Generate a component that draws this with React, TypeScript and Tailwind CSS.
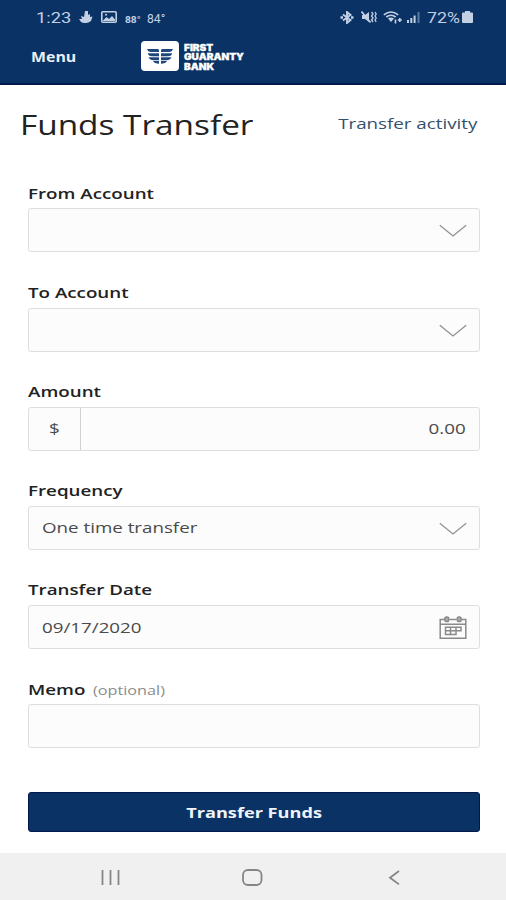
import type { ReactNode } from 'react';

const FIELD = 'flex h-11 w-full items-center justify-between rounded-[3px] border border-[#dedede] bg-[#fcfcfc]';
const VALUE = 'inline-block whitespace-nowrap text-[15px] leading-none text-[#4a4a4a]';

function Chevron() {
  return (
    <svg width="28" height="14" viewBox="0 0 28 14" fill="none" stroke="#929292" strokeWidth="1.3" className="mt-0.5 mr-3">
      <path d="M.8 1.2 14 12 27.2 1.2" />
    </svg>
  );
}

function CalendarIcon() {
  return (
    <svg width="28" height="24" viewBox="0 0 28 24" fill="none" stroke="#8a8a8a" strokeWidth="1.5" className="mt-px mr-3">
      <path d="M5 3.5H1.2v18.8h25.6V3.5H23M10.5 3.5h7M1.2 8.3h25.6" />
      <rect x="5.8" y="1" width="4" height="4.6" rx="1.8" fill="#aaa" />
      <rect x="18.2" y="1" width="4" height="4.6" rx="1.8" fill="#aaa" />
      <path d="M6.5 11.2H22v3.6h-5v3.800H6.5zM6.5 14.800H17M11.5 11.2v7.400M17 11.2v3.600" />
    </svg>
  );
}

function StatusBar() {
  return (
    <div className="flex h-[34px] items-center justify-between pr-[33px] pl-9 text-[#c3d0e4]">
      <div className="flex items-center">
        <div className="w-[35px]">
          <span className="inline-block origin-left scale-x-[1.18] font-[Roboto] text-[15.5px] leading-none">1:23</span>
        </div>
        <svg width="14" height="12" viewBox="0 0 14 12" fill="currentColor" className="ml-2">
          <path d="M6 0h3v4l2-1v3l2.5-.5L12 10q-5 3.5-10 1L0 8h3L2 5l3 1z" />
        </svg>
        <svg width="16" height="12" viewBox="0 0 16 12" fill="none" stroke="currentColor" strokeWidth="1.6" className="ml-2">
          <rect x=".8" y=".8" width="14.4" height="10.4" rx="1" />
          <path d="M2 9.5 5.5 6 8 8l3-3 3 3.5V10H2z" fill="currentColor" stroke="none" />
          <circle cx="5" cy="3.8" r="1" fill="currentColor" stroke="none" />
        </svg>
        <div className="ml-2 w-4">
          <span className="inline-block origin-left scale-x-[1.2] font-[Roboto] text-[8.5px] leading-none font-bold">88°</span>
        </div>
        <div className="ml-1.5">
          <span className="inline-block origin-left scale-x-[0.9] font-[Roboto] text-[13.5px] leading-none">84°</span>
        </div>
      </div>

      <div className="flex items-center">
        <svg width="14" height="13" viewBox="0 0 14 13" fill="none" stroke="currentColor" strokeWidth="1.9">
          <path d="m3 3.5 7.5 5.5L7 12V1l3.5 3L3 9.5" />
          <path d="M.5 6.5H3M11 6.5h2.5" strokeWidth="2.4" />
        </svg>
        <svg width="16" height="12" viewBox="0 0 16 12" fill="none" stroke="currentColor" strokeWidth="1.7" className="ml-[7px]">
          <path d="M1 4h3l4-3v10L4 8H1z" fill="currentColor" stroke="none" />
          <path d="m.5.5 9 11" />
          <path d="m10.5 1 1.5 2-1.5 2L12 7l-1.5 2 1.5 2M14 1l1.2 2L14 5l1.2 2L14 9l1.2 2" strokeWidth="1.3" />
        </svg>
        <svg width="20" height="13" viewBox="0 0 20 13" fill="none" stroke="currentColor" strokeWidth="1.6" className="ml-1.5">
          <path d="M.8 3.8q7.2-5.500 14.4 0M3.3 6q4.700-3.500 9.400 0" />
          <path d="M5 7.5q3-2 6 0L8 11z" fill="currentColor" stroke="none" />
          <path d="M12.5 8.5v4M16.8 7v4M14.8 9h4" />
        </svg>
        <svg width="13" height="11" viewBox="0 0 13 11" fill="currentColor" className="ml-1">
          <path d="M0 8h2v3H0zM3.3 6h2v5h-2zM6.6 3.5h2V11h-2z" />
          <path d="M10.5 0h2v11h-2z" opacity=".45" />
        </svg>
        <div className="ml-[7px] w-[35px]">
          <span className="inline-block origin-left scale-x-[1.18] font-[Roboto] text-[15px] leading-none">72%</span>
        </div>
        <svg width="11" height="12" viewBox="0 0 11 12" fill="currentColor">
          <path d="M3 0h5v1.5h2q1 0 1 1V11q0 1-1 1H1q-1 0-1-1V2.5q0-1 1-1h2z" />
        </svg>
      </div>
    </div>
  );
}

function BankLogo() {
  return (
    <div className="flex items-center gap-[5px]">
      <svg width="38" height="30" viewBox="0 0 38 30">
        <rect width="38" height="30" rx="4" fill="#fff" />
        <g fill="#20477b">
          <path d="M6 8h11q1 0 1 2v1H10Q7 11 6 8zM6.8 12.2H18v3h-7q-3.7 0-4.200-3zM7.5 16.2H18v3h-5.500q-3.700 0-5-3zM12 20h6v2.800q-4.500 0-6-2.800z" />
          <path d="M32 8H21q-1 0-1 2v1h8q3 0 4-3zM31.2 12.2H20v3h7q3.700 0 4.200-3zM30.5 16.2H20v3h5.500q3.700 0 5-3zM26 20h-6v2.800q4.500 0 6-2.800z" />
        </g>
      </svg>
      <div className="mt-0.5 flex origin-left scale-x-[1.12] flex-col font-[Inter] text-[9px] leading-[9.6px] font-black text-white [-webkit-text-stroke:0.3px_white]">
        <span>FIRST</span>
        <span>GUARANTY</span>
        <span>BANK</span>
      </div>
    </div>
  );
}

function Field({ label, hint, children }: { label: string; hint?: string; children: ReactNode }) {
  return (
    <div className="flex flex-col gap-1">
      <label className="flex h-[23px] items-center whitespace-nowrap">
        <span className="inline-block origin-left scale-x-[1.25] text-[15px] font-semibold text-[#222]">
          {label}
          {hint && <span className="ml-1.5 text-[13px] font-normal text-[#8c8c8c]">{hint}</span>}
        </span>
      </label>
      {children}
    </div>
  );
}

export default function App() {
  return (
    <div className="flex h-[900px] w-[506px] flex-col overflow-hidden bg-white font-['Open_Sans',sans-serif]">
      <header className="h-[85px] border-b-2 border-[#03184c] bg-[#0a3264]">
        <StatusBar />
        <div className="flex h-11 items-center pl-[31px]">
          <button className="flex w-[110px] items-center">
            <span className="inline-block origin-left scale-x-[1.06] text-[15px] font-bold text-[#e8eef8]">Menu</span>
          </button>
          <BankLogo />
        </div>
      </header>

      <main className="flex-1">
        <div className="flex h-20 items-center justify-between pr-[29px] pl-5">
          <h1 className="origin-left scale-x-[1.235] text-[27px] text-[#222]">Funds Transfer</h1>
          <a className="mb-1 origin-right scale-x-[1.25] text-[15px] text-[#34506f]">Transfer activity</a>
        </div>

        <form className="flex flex-col gap-[28.2px] pt-[16.4px] pr-[26px] pl-7">
          <Field label="From Account">
            <div className={FIELD}>
              <span />
              <Chevron />
            </div>
          </Field>
          <Field label="To Account">
            <div className={FIELD}>
              <span />
              <Chevron />
            </div>
          </Field>
          <Field label="Amount">
            <div className={FIELD}>
              <div className="flex h-full w-[52px] items-center justify-center border-r border-[#d2d2d2]">
                <span className={`${VALUE} scale-x-[1.25]`}>$</span>
              </div>
              <span className={`${VALUE} mr-[13px] origin-right scale-x-[1.25]`}>0.00</span>
            </div>
          </Field>
          <Field label="Frequency">
            <div className={FIELD}>
              <span className={`${VALUE} ml-[13px] origin-left scale-x-[1.25]`}>One time transfer</span>
              <Chevron />
            </div>
          </Field>
          <Field label="Transfer Date">
            <div className={FIELD}>
              <span className={`${VALUE} ml-[13px] origin-left scale-x-[1.25]`}>09/17/2020</span>
              <CalendarIcon />
            </div>
          </Field>
          <Field label="Memo" hint="(optional)">
            <div className={FIELD} />
          </Field>
          <button
            type="button"
            className="mt-[15.6px] flex h-10 items-center justify-center rounded-[3px] border border-[#03184c] bg-[#0a3264]"
          >
            <span className="scale-x-[1.21] text-[15px] font-bold text-[#f0f4fa]">Transfer Funds</span>
          </button>
        </form>
      </main>

      <nav className="h-[47px] bg-[#f0f0f0]">
        <svg width="506" height="47" viewBox="0 0 506 47" fill="none" stroke="#858585" strokeWidth="1.8">
          <path d="M102.5 17v15M110.5 17v15M118.5 17v15" />
          <rect x="243" y="17" width="18.5" height="15" rx="5" />
          <path d="m399 18-9 6.7 9 6.7" />
        </svg>
      </nav>
    </div>
  );
}
